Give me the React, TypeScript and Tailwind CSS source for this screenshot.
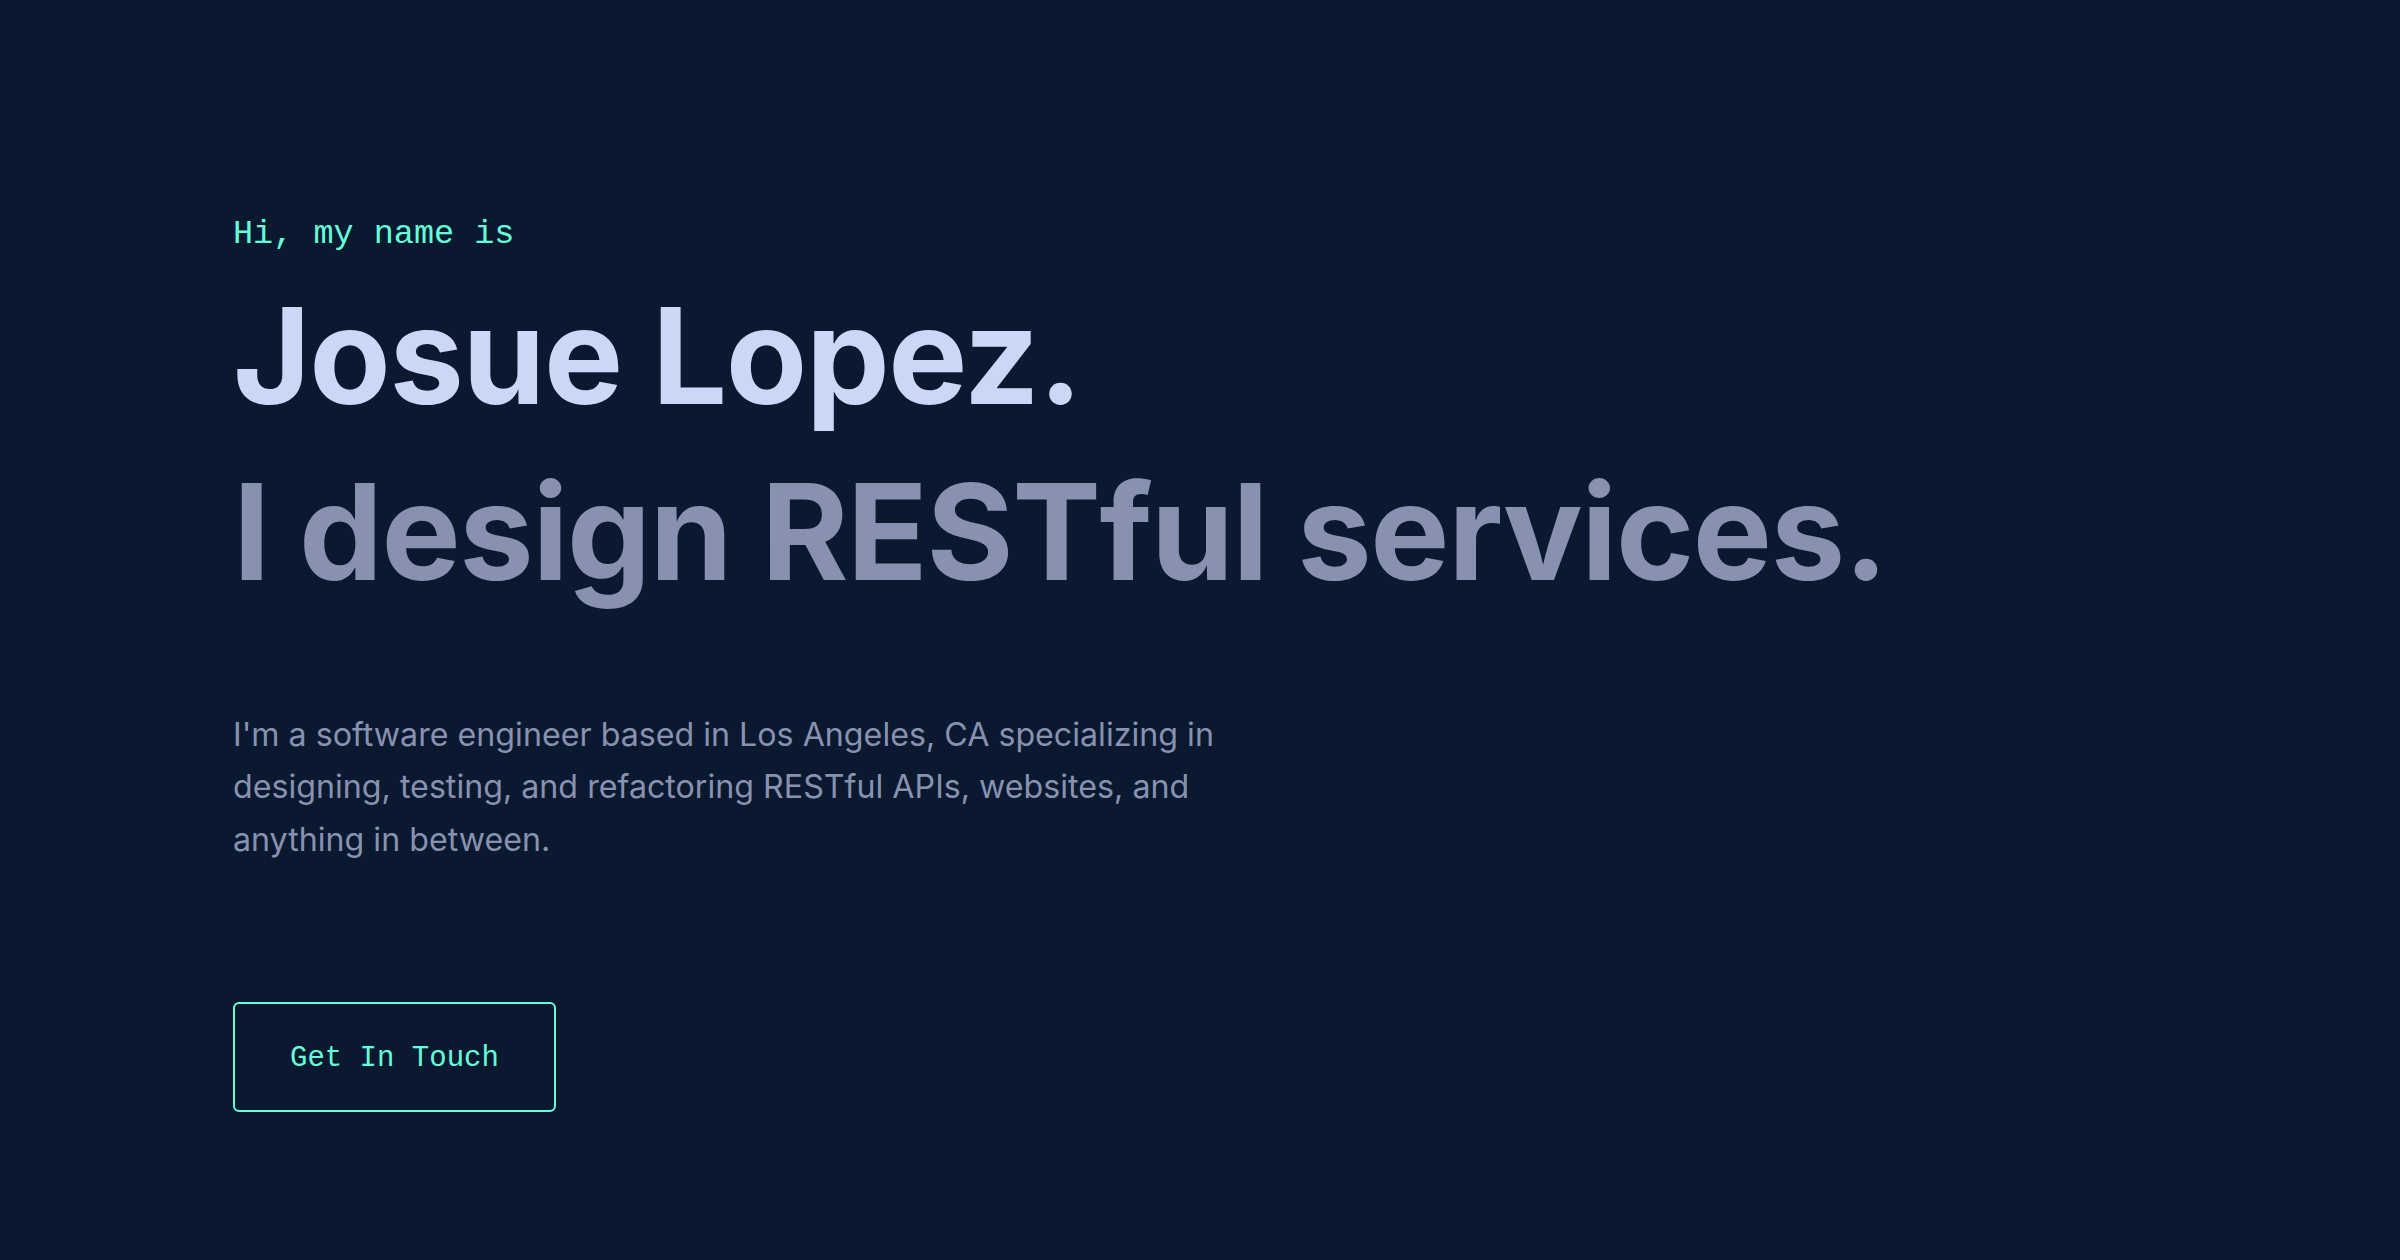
import React from 'react';

const mono = "font-['Liberation_Mono',monospace]";
const sans = "font-['Inter','Liberation_Sans',sans-serif]";

export default function App() {
    return (
        <main className="min-h-screen w-full bg-[#0a192f]">
            <section className="flex flex-col items-start pl-[233px] pt-[214px] pb-[120px]">
                {/* Intro */}
                <h1 className={`${mono} text-[33.5px] leading-[40px] text-[#64ffda]`}>Hi, my name is</h1>

                <h2 className={`${sans} mt-[29px] text-[133px] leading-[1.1] font-bold text-[#ccd6f6] tracking-[-1.4px]`}>
                    Josue Lopez.
                </h2>
                <h3 className={`${sans} mt-[30px] text-[133px] leading-[1.1] font-bold text-[#8892b0] tracking-[-1.4px]`}>
                    I design RESTful services.
                </h3>

                <p className={`${sans} mt-[103px] max-w-[1040px] text-[32.2px] leading-[52.5px] text-[#8892b0]`}>
                    I'm a software engineer based in Los Angeles, CA specializing in designing, testing, and
                    refactoring RESTful APIs, websites, and anything in between.
                </p>

                <a
                    href="#contact"
                    className={`${mono} mt-[136px] rounded-[6px] border-2 border-[#64ffda] px-[55px] pt-[40px] pb-[37px] text-[29px] leading-[29px] text-[#64ffda]`}
                >
                    Get In Touch
                </a>
            </section>
        </main>
    );
}
